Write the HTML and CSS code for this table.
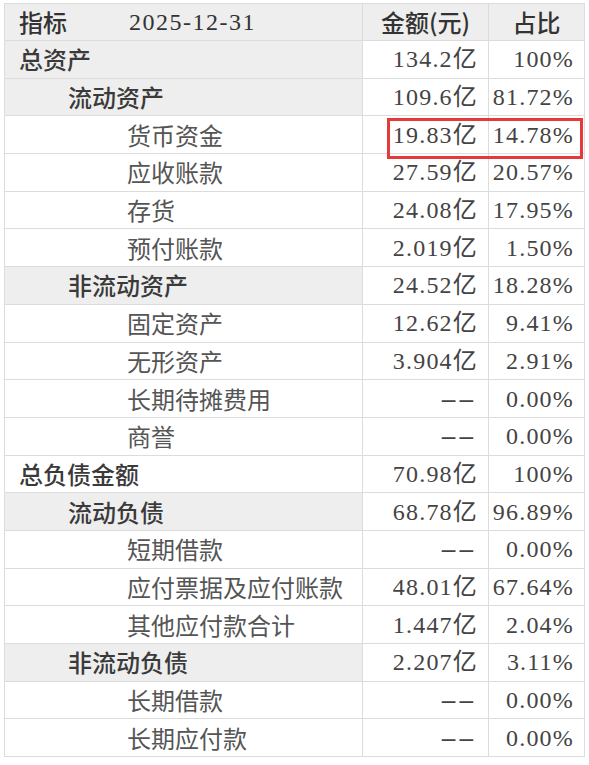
FILE: index.html
```html
<!DOCTYPE html>
<html lang="zh-CN">
<head>
<meta charset="utf-8">
<title>资产负债</title>
<link rel="stylesheet" href="styles.css">
</head>
<body>
<div class="sheet">
  <div class="row head">
    <div class="cell label"><span class="hname">指标</span><span class="num date">2025-12-31</span></div>
    <div class="cell center">金额(元)</div>
    <div class="cell center">占比</div>
  </div>
  <div class="row grp"><div class="cell label l0">总资产</div><div class="cell val num">134.2亿</div><div class="cell val num">100%</div></div>
  <div class="row grp"><div class="cell label l1">流动资产</div><div class="cell val num">109.6亿</div><div class="cell val num">81.72%</div></div>
  <div class="row marked"><div class="cell label l2">货币资金</div><div class="cell val num">19.83亿</div><div class="cell val num">14.78%</div><div class="mark"></div></div>
  <div class="row"><div class="cell label l2">应收账款</div><div class="cell val num">27.59亿</div><div class="cell val num">20.57%</div></div>
  <div class="row"><div class="cell label l2">存货</div><div class="cell val num">24.08亿</div><div class="cell val num">17.95%</div></div>
  <div class="row"><div class="cell label l2">预付账款</div><div class="cell val num">2.019亿</div><div class="cell val num">1.50%</div></div>
  <div class="row grp"><div class="cell label l1">非流动资产</div><div class="cell val num">24.52亿</div><div class="cell val num">18.28%</div></div>
  <div class="row"><div class="cell label l2">固定资产</div><div class="cell val num">12.62亿</div><div class="cell val num">9.41%</div></div>
  <div class="row"><div class="cell label l2">无形资产</div><div class="cell val num">3.904亿</div><div class="cell val num">2.91%</div></div>
  <div class="row"><div class="cell label l2">长期待摊费用</div><div class="cell val num"><span class="dash">--</span></div><div class="cell val num">0.00%</div></div>
  <div class="row"><div class="cell label l2">商誉</div><div class="cell val num"><span class="dash">--</span></div><div class="cell val num">0.00%</div></div>
  <div class="row"><div class="cell label l0">总负债金额</div><div class="cell val num">70.98亿</div><div class="cell val num">100%</div></div>
  <div class="row grp"><div class="cell label l1">流动负债</div><div class="cell val num">68.78亿</div><div class="cell val num">96.89%</div></div>
  <div class="row"><div class="cell label l2">短期借款</div><div class="cell val num"><span class="dash">--</span></div><div class="cell val num">0.00%</div></div>
  <div class="row"><div class="cell label l2">应付票据及应付账款</div><div class="cell val num">48.01亿</div><div class="cell val num">67.64%</div></div>
  <div class="row"><div class="cell label l2">其他应付款合计</div><div class="cell val num">1.447亿</div><div class="cell val num">2.04%</div></div>
  <div class="row grp"><div class="cell label l1">非流动负债</div><div class="cell val num">2.207亿</div><div class="cell val num">3.11%</div></div>
  <div class="row"><div class="cell label l2">长期借款</div><div class="cell val num"><span class="dash">--</span></div><div class="cell val num">0.00%</div></div>
  <div class="row"><div class="cell label l2">长期应付款</div><div class="cell val num"><span class="dash">--</span></div><div class="cell val num">0.00%</div></div>
</div>
</body>
</html>
```

FILE: styles.css
```css
html, body {
  margin: 0;
  padding: 0;
  background: #ffffff;
}
body {
  padding: 3px 0 0 4px;
  font-family: "Noto Sans CJK SC", sans-serif;
  font-size: 24px;
  color: #444;
}
.sheet {
  width: 581px;
  display: flex;
  flex-direction: column;
  border-top: 1px solid #dcdcdc;
  border-left: 1px solid #dcdcdc;
  box-sizing: border-box;
}
.row {
  display: grid;
  grid-template-columns: 358px 126px 96px;
  height: 37.7px;
}
.row.head {
  height: 37px;
  background: #eeeeee;
  color: #333;
}
.cell {
  display: flex;
  align-items: center;
  border-right: 1px solid #dcdcdc;
  border-bottom: 1px solid #dcdcdc;
  box-sizing: border-box;
  white-space: nowrap;
  line-height: 1;
}
.label { padding-left: 14px; }
.grp .label { background: #eeeeee; }
.l0, .l1 { color: #3a3a3a; font-weight: 500; }
.l1 { padding-left: 63px; }
.l2 { padding-left: 122px; font-weight: 400; color: #555; }
.hname { font-weight: 500; }
.date { margin-left: 62px; color: #333; }
.center { justify-content: center; font-weight: 500; }
.val {
  justify-content: flex-end;
  padding-right: 10px;
}
.num {
  font-family: "Liberation Serif", "Noto Sans CJK SC", serif;
  letter-spacing: 1.5px;
}
.val.num { letter-spacing: 1.2px; }
.dash {
  display: inline-block;
  transform: scaleX(2.2);
  transform-origin: right center;
  letter-spacing: 0;
  margin-right: 3px;
}
.marked { position: relative; }
.mark {
  position: absolute;
  left: 382px;
  top: 1.5px;
  width: 196px;
  height: 41px;
  border: 3px solid #e53a3a;
  box-sizing: border-box;
  pointer-events: none;
}
```
